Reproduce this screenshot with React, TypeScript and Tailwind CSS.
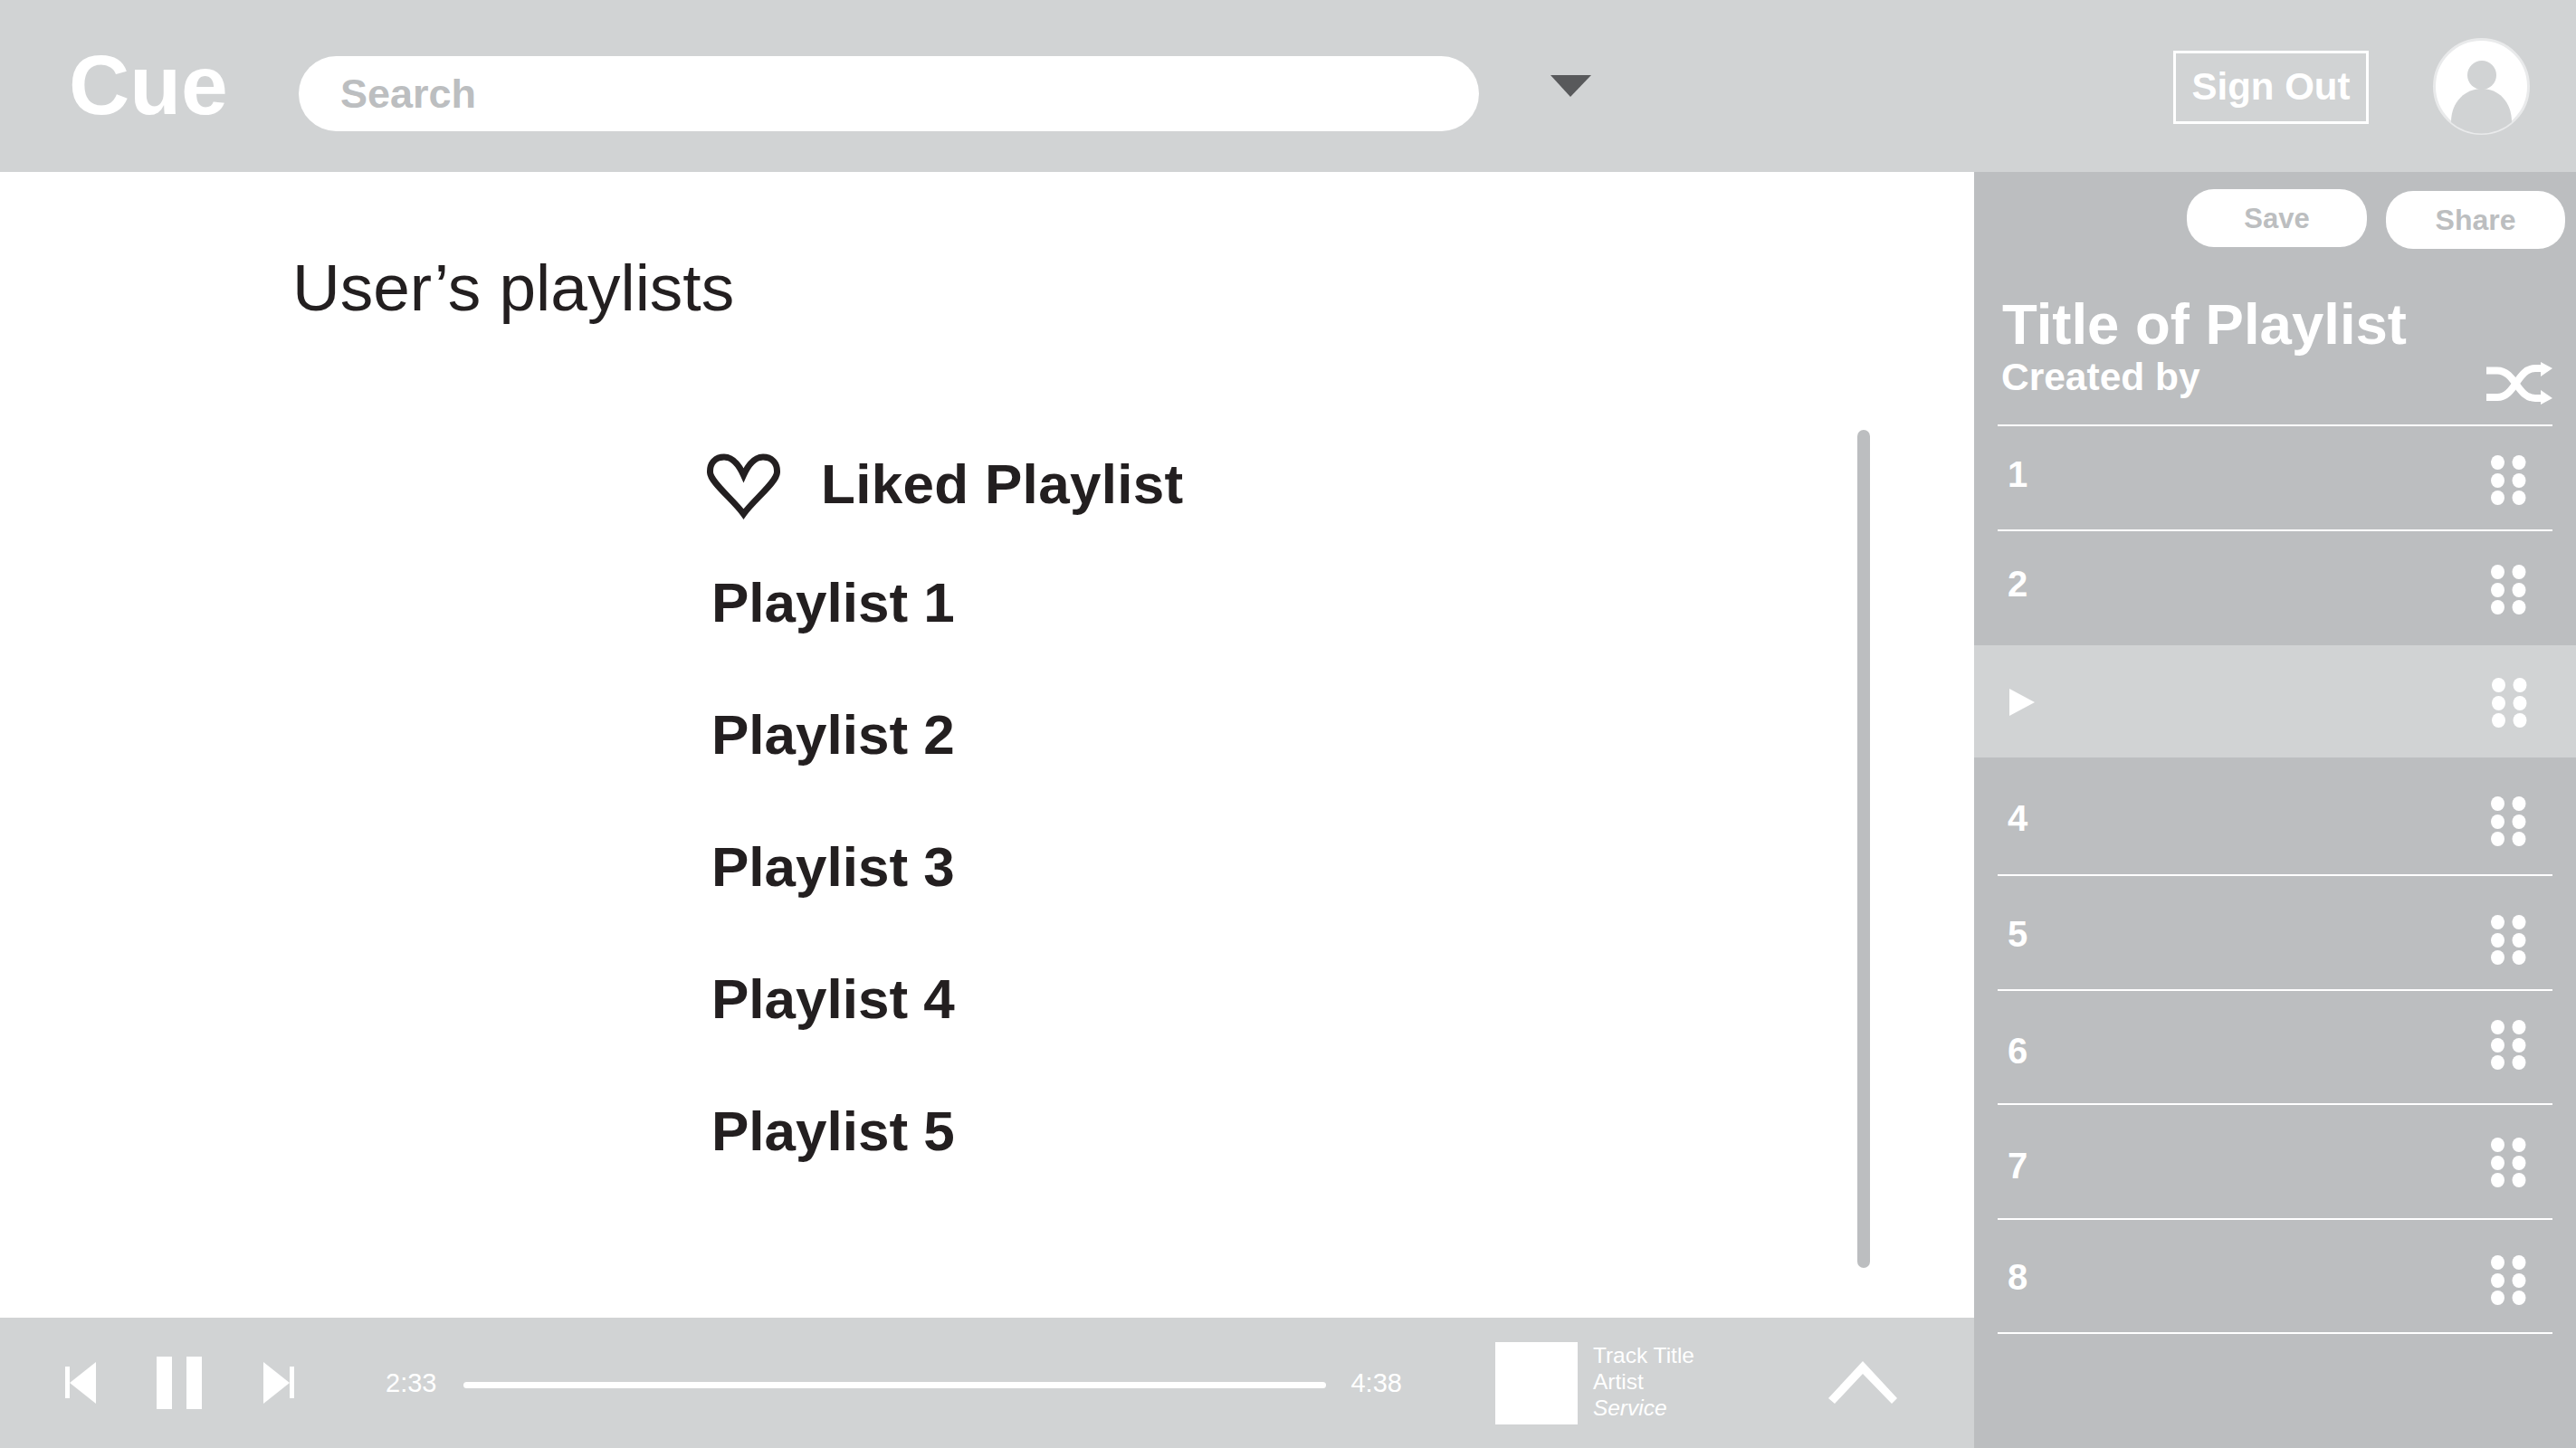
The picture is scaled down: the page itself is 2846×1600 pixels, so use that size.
const rows = [
  { label: '1', cls: 'h-[116px] border-b-2 border-white', labelTop: 'mt-[33px]', dotsTop: 'mt-[32px]' },
  { label: '2', cls: 'h-[126px]', labelTop: 'mt-[38px]', dotsTop: 'mt-[37px]' },
  { label: '', cls: 'h-[124px]', labelTop: 'mt-[48px]', dotsTop: 'mt-[36px]', playing: true },
  { label: '4', cls: 'h-[131px] border-b-2 border-white', labelTop: 'mt-[47px]', dotsTop: 'mt-[43px]' },
  { label: '5', cls: 'h-[127px] border-b-2 border-white', labelTop: 'mt-[44px]', dotsTop: 'mt-[43px]' },
  { label: '6', cls: 'h-[126px] border-b-2 border-white', labelTop: 'mt-[46px]', dotsTop: 'mt-[32px]' },
  { label: '7', cls: 'h-[127px] border-b-2 border-white', labelTop: 'mt-[47px]', dotsTop: 'mt-[36px]' },
  { label: '8', cls: 'h-[126px] border-b-2 border-white', labelTop: 'mt-[43px]', dotsTop: 'mt-[39px]' },
]

const playlists = ['Playlist 1', 'Playlist 2', 'Playlist 3', 'Playlist 4', 'Playlist 5']

function Dots({ className }: { className: string }) {
  return (
    <svg className={className} width="39" height="55" viewBox="0 0 39 55" fill="#fff">
      <ellipse cx="7.5" cy="8" rx="7.5" ry="8" />
      <ellipse cx="31" cy="8" rx="7.5" ry="8" />
      <ellipse cx="7.5" cy="28" rx="7.5" ry="8" />
      <ellipse cx="31" cy="28" rx="7.5" ry="8" />
      <ellipse cx="7.5" cy="47" rx="7.5" ry="8" />
      <ellipse cx="31" cy="47" rx="7.5" ry="8" />
    </svg>
  )
}

function Avatar() {
  return (
    <svg width="107" height="107" viewBox="0 0 107 107">
      <circle cx="53.5" cy="53.5" r="52" fill="#fff" stroke="#e9eaeb" strokeWidth="3" />
      <circle cx="54" cy="41" r="16" fill="#d1d3d4" />
      <path d="M20 93 C20 70 36 56 54 56 C72 56 87 70 87 93 A51 51 0 0 1 20 93 Z" fill="#d1d3d4" />
    </svg>
  )
}

function Shuffle() {
  return (
    <svg className="mt-[4px]" width="73" height="47" viewBox="0 0 73 47" fill="none">
      <path d="M0 9.5 H12 C32 9.5 34 40 54 40 H62" stroke="#fff" strokeWidth="8" />
      <path d="M0 39 H12 C32 39 34 7 54 7 H62" stroke="#fff" strokeWidth="8" />
      <polygon points="60,0 73,7 60,16" fill="#fff" />
      <polygon points="60,31 73,40 60,47" fill="#fff" />
    </svg>
  )
}

function Heart() {
  return (
    <svg width="83" height="73" viewBox="0 0 83 73" fill="none">
      <path
        d="M41.5 67 C30 51 5 32 4.5 21 C4 10 11 4 20 4 C29 4 36 12 41.5 24 C47 12 54 4 63 4 C72 4 79 10 78.5 21 C78 32 53 51 41.5 67 Z"
        stroke="#231f20"
        strokeWidth="7"
      />
    </svg>
  )
}

function Header() {
  return (
    <div className="h-[190px] flex items-start bg-[#d1d3d4] pl-[76px] pr-[51px]">
      <div className="w-[254px] mt-[48px] text-[93px] leading-[93px] font-bold text-white">Cue</div>
      <div className="w-[1304px] h-[83px] mt-[62px] pl-[46px] flex items-center rounded-full bg-white text-[45px] font-bold text-[#bcbec0]">
        Search
      </div>
      <svg className="ml-[79px] mt-[83px]" width="45" height="24" viewBox="0 0 45 24">
        <polygon points="0,0 45,0 22,24" fill="#58595b" />
      </svg>
      <div className="ml-auto mt-[56px] w-[216px] h-[81px] pb-[2px] flex items-center justify-center border-[3px] border-white text-[42px] font-bold text-white">
        Sign Out
      </div>
      <div className="ml-[71px] mt-[42px]">
        <Avatar />
      </div>
    </div>
  )
}

function PlaylistArea() {
  return (
    <div className="flex-1 flex items-start">
      <div className="flex-1 pl-[323px] pt-[91px]">
        <h1 className="text-[73px] leading-[73px] text-[#231f20]">User’s playlists</h1>
        <div className="mt-[147px] ml-[457px] flex items-start gap-[44px]">
          <Heart />
          <span className="mt-[3px] text-[62px] leading-[62px] font-bold tracking-[0.3px] text-[#231f20]">
            Liked Playlist
          </span>
        </div>
        <div className="mt-[61px] ml-[463px] flex flex-col gap-[84px]">
          {playlists.map((name) => (
            <div key={name} className="text-[62px] leading-[62px] font-bold text-[#231f20]">
              {name}
            </div>
          ))}
        </div>
      </div>
      <div className="mt-[285px] mr-[115px] w-[14px] h-[926px] rounded-full bg-[#bcbec0]" />
    </div>
  )
}

function PlayerBar() {
  return (
    <div className="h-[144px] flex items-center bg-[#d1d3d4] pl-[72px] pr-[85px] text-white">
      <svg width="34" height="46" viewBox="0 0 34 46" fill="#fff">
        <rect x="0" y="5" width="5" height="35" />
        <polygon points="34,0 34,46 5,23" />
      </svg>
      <div className="ml-[67px] flex gap-[16px]">
        <div className="w-[17px] h-[58px] bg-white" />
        <div className="w-[17px] h-[58px] bg-white" />
      </div>
      <svg className="ml-[68px]" width="34" height="46" viewBox="0 0 34 46" fill="#fff">
        <rect x="29" y="5" width="5" height="35" />
        <polygon points="0,0 0,46 29,23" />
      </svg>
      <span className="ml-[101px] text-[29px] leading-[29px]">2:33</span>
      <div className="ml-[30px] mt-[5px] w-[953px] h-[7px] rounded-full bg-white" />
      <span className="ml-[27px] text-[29px] leading-[29px]">4:38</span>
      <div className="ml-[103px] w-[91px] h-[91px] bg-white" />
      <div className="ml-[17px] -mt-[3px] text-[24.5px] leading-[29px]">
        <div>Track Title</div>
        <div>Artist</div>
        <div className="italic">Service</div>
      </div>
      <svg className="ml-auto" width="76" height="48" viewBox="0 0 76 48" fill="#fff">
        <polygon points="38,0 76,41 70,47 38,14 7,47 0,41" />
      </svg>
    </div>
  )
}

function QueuePanel() {
  return (
    <div className="w-[665px] bg-[#bcbec0]">
      <div className="flex justify-end gap-[21px] pt-[19px] pr-[12px]">
        <div className="w-[199px] h-[64px] pt-[2px] flex items-center justify-center rounded-[30px] bg-white text-[31px] font-bold text-[#bcbec0]">
          Save
        </div>
        <div className="mt-[2px] w-[198px] h-[64px] flex items-center justify-center rounded-[30px] bg-white text-[32px] font-bold text-[#bcbec0]">
          Share
        </div>
      </div>
      <div className="mt-[52px] pl-[31px] text-[63.5px] leading-[63px] font-bold text-white">Title of Playlist</div>
      <div className="mt-[6px] pl-[30px] pr-[26px] flex items-start justify-between">
        <span className="text-[42.5px] leading-[42px] font-bold text-white">Created by</span>
        <Shuffle />
      </div>
      <div className="mt-[22px] mx-[26px] border-t-2 border-white" />
      {rows.map((row, i) =>
        row.playing ? (
          <div key={i} className="h-[124px] flex items-start justify-between bg-[#d1d3d4] pl-[39px] pr-[54px]">
            <svg className={row.labelTop} width="28" height="30" viewBox="0 0 28 30">
              <polygon points="0,0 28,15 0,30" fill="#fff" />
            </svg>
            <Dots className={row.dotsTop} />
          </div>
        ) : (
          <div key={i} className="px-[26px]">
            <div className={`${row.cls} flex items-start justify-between pl-[11px] pr-[29px]`}>
              <span className={`${row.labelTop} text-[40px] leading-[40px] font-bold text-white`}>{row.label}</span>
              <Dots className={row.dotsTop} />
            </div>
          </div>
        )
      )}
    </div>
  )
}

export default function App() {
  return (
    <div className="w-[2846px] h-[1600px] flex flex-col overflow-hidden bg-white font-['Liberation_Sans',sans-serif]">
      <Header />
      <div className="flex-1 flex">
        <div className="w-[2181px] flex flex-col">
          <PlaylistArea />
          <PlayerBar />
        </div>
        <QueuePanel />
      </div>
    </div>
  )
}
